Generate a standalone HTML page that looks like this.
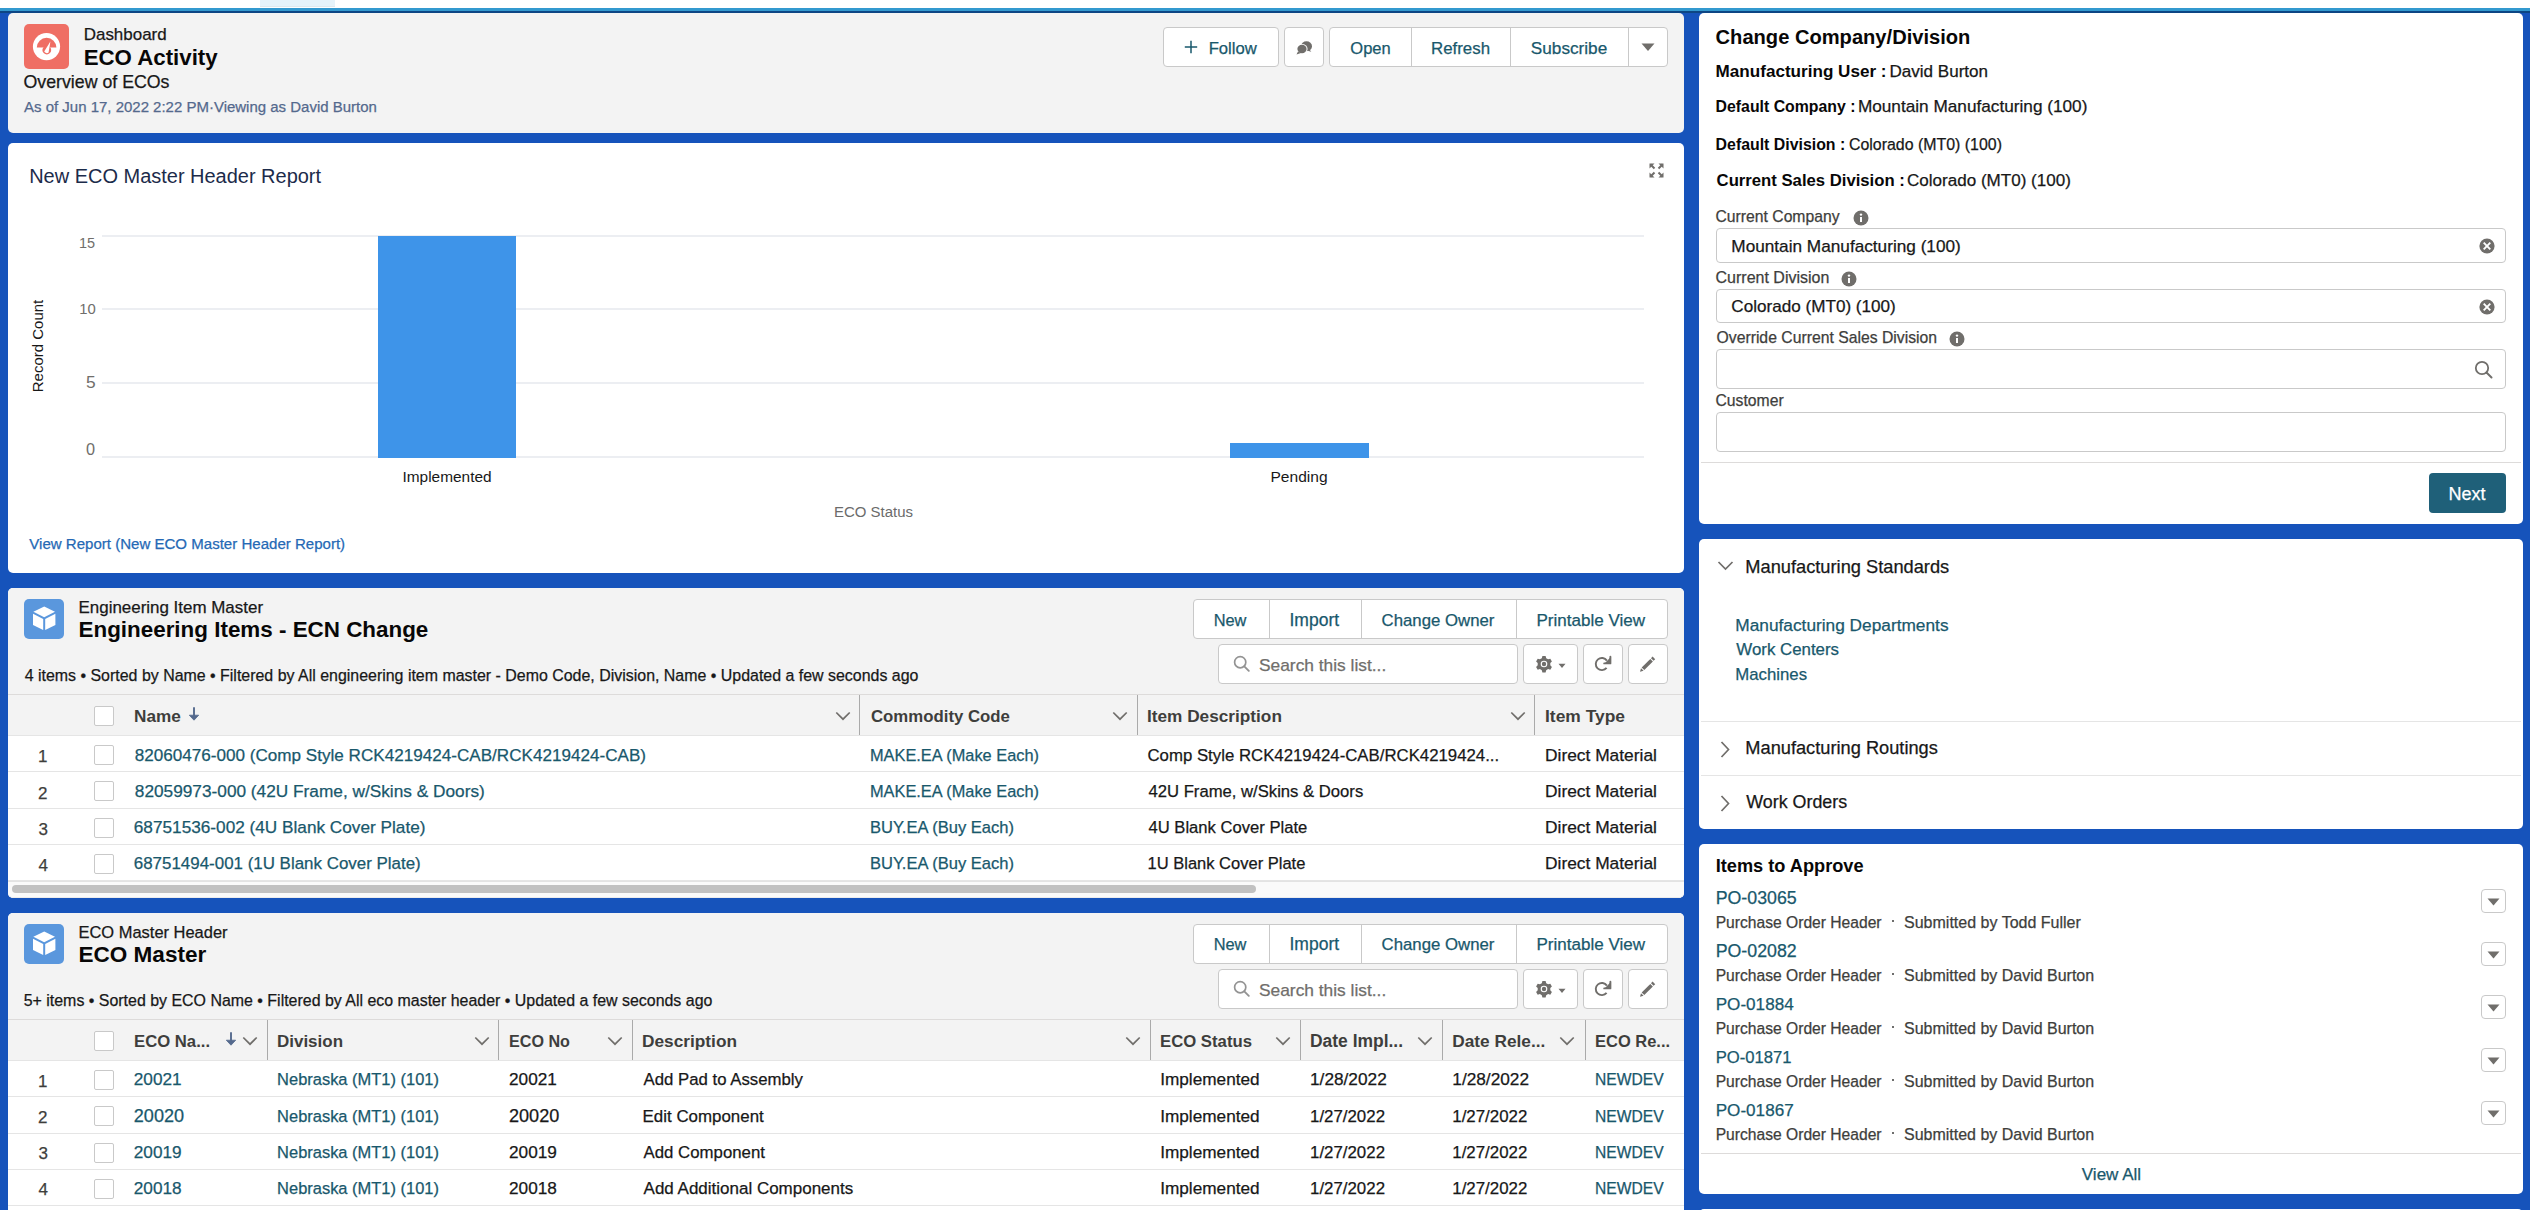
<!DOCTYPE html><html><head><meta charset="utf-8"><style>
html,body{margin:0;padding:0;width:2530px;height:1210px;overflow:hidden;background:#1653bb;font-family:"Liberation Sans",sans-serif;}
.t{position:absolute;white-space:nowrap;-webkit-text-stroke:0.25px currentColor;}
.r{position:absolute;box-sizing:border-box;}
</style></head><body>
<div class="r" style="left:0px;top:0px;width:2530px;height:8px;background:#fff"></div>
<div class="r" style="left:260px;top:0px;width:75px;height:7px;background:#e6f3fa;border-bottom:1px solid #dfe9ee"></div>
<div class="r" style="left:0px;top:8px;width:2530px;height:3px;background:#3399cf"></div>
<div class="r" style="left:0px;top:11px;width:2530px;height:2px;background:#0d4684"></div>
<div class="r" style="left:8px;top:13px;width:1676px;height:120px;background:#f3f3f3;border-radius:5px;"></div>
<div class="r" style="left:24px;top:24px;width:45px;height:45px;background:#ef6e64;border-radius:5px"></div>
<svg class="r" style="left:24px;top:24px" width="45" height="45" viewBox="0 0 45 45"><circle cx="22.5" cy="22.6" r="13.6" fill="#fff"/><path d="M12.8 23.6 A9.8 9.8 0 0 1 32.4 23.6 Z" fill="#ef6e64"/><circle cx="22.8" cy="26" r="4.4" fill="#ef6e64"/><path d="M20.2 27.6 L26.4 17.6 L24.6 28.6 Q22.5 30.5 20.2 27.6Z" fill="#fff"/></svg>
<div class="t" style="left:83.70px;top:26px;font-size:16.98px;line-height:16.98px;color:#181818;">Dashboard</div>
<div class="t" style="left:83.70px;top:47px;font-size:22.26px;line-height:22.26px;color:#080707;font-weight:700;-webkit-text-stroke:0;">ECO Activity</div>
<div class="t" style="left:23.50px;top:74px;font-size:17.75px;line-height:17.75px;color:#181818;">Overview of ECOs</div>
<div class="t" style="left:24.00px;top:99px;font-size:14.99px;line-height:14.99px;color:#54698d;">As of Jun 17, 2022 2:22 PM·Viewing as David Burton</div>
<div class="r" style="left:1163px;top:27px;width:116px;height:40px;background:#fff;border:1px solid #c9c9c9;border-radius:4px"></div>
<svg class="r" style="left:1184px;top:40px" width="14" height="14" viewBox="0 0 14 14"><path d="M7 0.8V13.2M0.8 7H13.2" stroke="#19586c" stroke-width="1.5"/></svg>
<div class="t" style="left:1208.70px;top:41px;font-size:16.65px;line-height:16.65px;color:#19586c;">Follow</div>
<div class="r" style="left:1284px;top:27px;width:40px;height:40px;background:#fff;border:1px solid #c9c9c9;border-radius:4px"></div>
<svg class="r" style="left:1294px;top:40px" width="20" height="16" viewBox="0 0 20 16"><ellipse cx="12.5" cy="6.2" rx="5.5" ry="5" fill="#706e6b"/><ellipse cx="8" cy="9" rx="5.6" ry="5" fill="#fff"/><ellipse cx="8" cy="9" rx="4.6" ry="4.2" fill="#706e6b"/><path d="M4 11.5 L2.5 14.5 L7 13Z" fill="#706e6b"/><path d="M15.5 9.5 L17.3 11.8 L13.5 10.8Z" fill="#706e6b"/></svg>
<div class="r" style="left:1329px;top:27px;width:339px;height:40px;background:#fff;border:1px solid #c9c9c9;border-radius:4px"></div>
<div class="r" style="left:1411px;top:27px;width:1px;height:40px;background:#c9c9c9"></div>
<div class="r" style="left:1510px;top:27px;width:1px;height:40px;background:#c9c9c9"></div>
<div class="r" style="left:1628px;top:27px;width:1px;height:40px;background:#c9c9c9"></div>
<div class="t" style="left:1350.30px;top:41px;font-size:16.53px;line-height:16.53px;color:#19586c;">Open</div>
<div class="t" style="left:1431.00px;top:41px;font-size:16.87px;line-height:16.87px;color:#19586c;">Refresh</div>
<div class="t" style="left:1530.80px;top:40px;font-size:17.19px;line-height:17.19px;color:#19586c;">Subscribe</div>
<svg class="r" style="left:1640px;top:42px" width="16" height="10" viewBox="0 0 16 10"><path d="M1.5 1.5H14.5L8 9Z" fill="#706e6b"/></svg>
<div class="r" style="left:8px;top:143px;width:1676px;height:430px;background:#fff;border-radius:5px;"></div>
<div class="t" style="left:29.20px;top:166px;font-size:19.98px;line-height:19.98px;color:#1c2b4a;-webkit-text-stroke:0;">New ECO Master Header Report</div>
<svg class="r" style="left:1649px;top:163px" width="15" height="15" viewBox="0 0 15 15"><g stroke="#706e6b" stroke-width="2" fill="none"><path d="M1.5 1.5L5.5 5.5M9.5 5.5L13.5 1.5M1.5 13.5L5.5 9.5M9.5 9.5L13.5 13.5"/></g><g fill="#706e6b"><path d="M0.5 0.5H5.5L0.5 5.5Z"/><path d="M14.5 0.5V5.5L9.5 0.5Z"/><path d="M0.5 14.5V9.5L5.5 14.5Z"/><path d="M14.5 14.5H9.5L14.5 9.5Z"/></g></svg>
<div class="r" style="left:102px;top:235px;width:1542px;height:2px;background:#eceef2"></div>
<div class="r" style="left:102px;top:308px;width:1542px;height:2px;background:#eceef2"></div>
<div class="r" style="left:102px;top:382px;width:1542px;height:2px;background:#eceef2"></div>
<div class="r" style="left:102px;top:456px;width:1542px;height:2px;background:#eceef2"></div>
<div class="r" style="left:378px;top:236px;width:138px;height:222px;background:#3e94e9"></div>
<div class="r" style="left:1230px;top:443px;width:139px;height:15px;background:#3e94e9"></div>
<div class="t" style="left:79.00px;top:236px;font-size:14.48px;line-height:14.48px;color:#706e6b;-webkit-text-stroke:0;">15</div>
<div class="t" style="left:79.30px;top:302px;font-size:14.87px;line-height:14.87px;color:#706e6b;-webkit-text-stroke:0;">10</div>
<div class="t" style="left:86.00px;top:374px;font-size:17.35px;line-height:17.35px;color:#706e6b;-webkit-text-stroke:0;">5</div>
<div class="t" style="left:86.00px;top:441px;font-size:16.27px;line-height:16.27px;color:#706e6b;-webkit-text-stroke:0;">0</div>
<div class="t" style="left:402.50px;top:469px;font-size:15.41px;line-height:15.41px;color:#181818;-webkit-text-stroke:0;">Implemented</div>
<div class="t" style="left:1270.50px;top:469px;font-size:15.55px;line-height:15.55px;color:#181818;-webkit-text-stroke:0;">Pending</div>
<div class="t" style="left:834.00px;top:505px;font-size:14.96px;line-height:14.96px;color:#6b6b6b;-webkit-text-stroke:0;">ECO Status</div>
<div class="t" style="left:36.9px;top:346.3px;transform:translate(-50%,-50%) rotate(-90deg);font-size:15px;line-height:15px;color:#181818;-webkit-text-stroke:0">Record Count</div>
<div class="t" style="left:29.30px;top:536px;font-size:15.05px;line-height:15.05px;color:#2569b5;">View Report (New ECO Master Header Report)</div>
<div class="r" style="left:8px;top:588px;width:1676px;height:310px;background:#fff;border-radius:5px;overflow:hidden;"></div>
<div class="r" style="left:8px;top:588px;width:1676px;height:147px;background:#f3f3f3;border-radius:5px 5px 0 0"></div>
<div class="r" style="left:24px;top:599px;width:40px;height:40px;background:#5a97dd;border-radius:5px"></div>
<svg class="r" style="left:24px;top:599px" width="40" height="40" viewBox="0 0 40 40"><path d="M20.2 7.5L31 12.8L20.2 18.2L9.4 12.8Z" fill="#fff"/><path d="M9 14.8L19.2 19.9V31L9 25.9Z" fill="#fff"/><path d="M31.4 14.8L21.2 19.9V31L31.4 25.9Z" fill="#fff"/></svg>
<div class="t" style="left:78.50px;top:600px;font-size:16.94px;line-height:16.94px;color:#181818;">Engineering Item Master</div>
<div class="t" style="left:78.50px;top:619px;font-size:22.41px;line-height:22.41px;color:#080707;font-weight:700;-webkit-text-stroke:0;">Engineering Items - ECN Change</div>
<div class="t" style="left:24.70px;top:668px;font-size:15.94px;line-height:15.94px;color:#181818;">4 items • Sorted by Name • Filtered by All engineering item master - Demo Code, Division, Name • Updated a few seconds ago</div>
<div class="r" style="left:1193px;top:599px;width:475px;height:40px;background:#fff;border:1px solid #c9c9c9;border-radius:4px"></div>
<div class="r" style="left:1269px;top:599px;width:1px;height:40px;background:#c9c9c9"></div>
<div class="r" style="left:1361px;top:599px;width:1px;height:40px;background:#c9c9c9"></div>
<div class="r" style="left:1516px;top:599px;width:1px;height:40px;background:#c9c9c9"></div>
<div class="t" style="left:1213.70px;top:612px;font-size:16.36px;line-height:16.36px;color:#19586c;">New</div>
<div class="t" style="left:1289.50px;top:612px;font-size:17.5px;line-height:17.5px;color:#19586c;">Import</div>
<div class="t" style="left:1381.60px;top:613px;font-size:16.77px;line-height:16.77px;color:#19586c;">Change Owner</div>
<div class="t" style="left:1536.50px;top:612px;font-size:17.04px;line-height:17.04px;color:#19586c;">Printable View</div>
<div class="r" style="left:1218px;top:644px;width:300px;height:40px;background:#fff;border:1px solid #c9c9c9;border-radius:4px"></div>
<svg class="r" style="left:1233px;top:655px" width="18" height="18" viewBox="0 0 18 18"><circle cx="7.2" cy="7.2" r="5.6" fill="none" stroke="#939393" stroke-width="1.7"/><path d="M11.3 11.3L15.8 15.8" stroke="#939393" stroke-width="1.9" stroke-linecap="round"/></svg>
<div class="t" style="left:1259.00px;top:657px;font-size:17.35px;line-height:17.35px;color:#706e6b;">Search this list...</div>
<div class="r" style="left:1523px;top:644px;width:55px;height:40px;background:#fff;border:1px solid #c9c9c9;border-radius:4px"></div>
<svg class="r" style="left:1534px;top:654px" width="20" height="20" viewBox="0 0 20 20"><g transform="translate(10 10)"><path fill="#706e6b" d="M-1.6 -8h3.2l0.6 2.2 1.9 1.1 2.2 -0.6 1.6 2.8 -1.6 1.6v2.2l1.6 1.6 -1.6 2.8 -2.2 -0.6 -1.9 1.1 -0.6 2.2h-3.2l-0.6 -2.2 -1.9 -1.1 -2.2 0.6 -1.6 -2.8 1.6 -1.6v-2.2l-1.6 -1.6 1.6 -2.8 2.2 0.6 1.9 -1.1z"/><circle r="3.3" fill="#fff"/><circle r="2.2" fill="#706e6b"/></g></svg>
<svg class="r" style="left:1558px;top:663px" width="8" height="6" viewBox="0 0 8 6"><path d="M0.5 0.8H7.5L4 5Z" fill="#706e6b"/></svg>
<div class="r" style="left:1583px;top:644px;width:40px;height:40px;background:#fff;border:1px solid #c9c9c9;border-radius:4px"></div>
<svg class="r" style="left:1593px;top:655px" width="20" height="20" viewBox="0 0 20 20"><path d="M13.9 5.6A6.1 6.1 0 1 0 13.6 12.9" fill="none" stroke="#706e6b" stroke-width="1.9"/><path d="M17.4 1.8V8.4H11.2" fill="none" stroke="#706e6b" stroke-width="1.9" stroke-linejoin="round" stroke-linecap="round"/><path d="M17.2 2.5V8.2H11.8Z" fill="#706e6b"/></svg>
<div class="r" style="left:1628px;top:644px;width:40px;height:40px;background:#fff;border:1px solid #c9c9c9;border-radius:4px"></div>
<svg class="r" style="left:1638px;top:654px" width="20" height="20" viewBox="0 0 20 20"><path d="M14.6 2.6l2.6 2.6 -1.6 1.6 -2.6 -2.6z" fill="#706e6b"/><path d="M12.3 4.9l2.6 2.6 -8.6 8.6 -2.6 -2.6z" fill="#706e6b"/><path d="M3 14.2l2.6 2.6 -3.6 1z" fill="#706e6b"/></svg>
<div class="r" style="left:8px;top:694px;width:1676px;height:1px;background:#dddbda"></div>
<div class="r" style="left:8px;top:735px;width:1676px;height:1px;background:#e5e5e5"></div>
<div class="r" style="left:94px;top:706px;width:20px;height:20px;background:#fff;border:1px solid #c9c9c9;border-radius:2px"></div>
<div class="t" style="left:134.00px;top:708px;font-size:17.19px;line-height:17.19px;color:#3e3e3c;font-weight:700;-webkit-text-stroke:0;">Name</div>
<svg class="r" style="left:187.7px;top:705px" width="12" height="18" viewBox="0 0 12 18"><path d="M6 3V11" stroke="#54698d" stroke-width="1.9" stroke-linecap="round"/><path d="M1.3 10.2H10.7L6 15.2Z" fill="#54698d" stroke="#54698d" stroke-width="0.8" stroke-linejoin="round"/></svg>
<svg class="r" style="left:835px;top:708px" width="16" height="16" viewBox="0 0 16 16"><path d="M1.3 4.5L8 11.2L14.7 4.5" fill="none" stroke="#706e6b" stroke-width="1.7"/></svg>
<div class="r" style="left:859px;top:695px;width:1px;height:40px;background:#aaaaaa"></div>
<div class="t" style="left:871.00px;top:709px;font-size:16.79px;line-height:16.79px;color:#3e3e3c;font-weight:700;-webkit-text-stroke:0;">Commodity Code</div>
<svg class="r" style="left:1112px;top:708px" width="16" height="16" viewBox="0 0 16 16"><path d="M1.3 4.5L8 11.2L14.7 4.5" fill="none" stroke="#706e6b" stroke-width="1.7"/></svg>
<div class="r" style="left:1137px;top:695px;width:1px;height:40px;background:#aaaaaa"></div>
<div class="t" style="left:1147.00px;top:708px;font-size:17.23px;line-height:17.23px;color:#3e3e3c;font-weight:700;-webkit-text-stroke:0;">Item Description</div>
<svg class="r" style="left:1510px;top:708px" width="16" height="16" viewBox="0 0 16 16"><path d="M1.3 4.5L8 11.2L14.7 4.5" fill="none" stroke="#706e6b" stroke-width="1.7"/></svg>
<div class="r" style="left:1534px;top:695px;width:1px;height:40px;background:#aaaaaa"></div>
<div class="t" style="left:1545.00px;top:708px;font-size:17.41px;line-height:17.41px;color:#3e3e3c;font-weight:700;-webkit-text-stroke:0;">Item Type</div>
<div class="r" style="left:8px;top:771px;width:1676px;height:1px;background:#e5e5e5"></div>
<div class="t" style="left:38.00px;top:748px;font-size:17px;line-height:17px;color:#3e3e3c;">1</div>
<div class="r" style="left:94px;top:745px;width:20px;height:20px;background:#fff;border:1px solid #c9c9c9;border-radius:2px"></div>
<div class="t" style="left:134.80px;top:747px;font-size:17.1px;line-height:17.1px;color:#19586c;">82060476-000 (Comp Style RCK4219424-CAB/RCK4219424-CAB)</div>
<div class="t" style="left:870.00px;top:747px;font-size:16.35px;line-height:16.35px;color:#19586c;">MAKE.EA (Make Each)</div>
<div class="t" style="left:1147.50px;top:748px;font-size:16.8px;line-height:16.8px;color:#181818;">Comp Style RCK4219424-CAB/RCK4219424...</div>
<div class="t" style="left:1545.00px;top:747px;font-size:17.38px;line-height:17.38px;color:#181818;">Direct Material</div>
<div class="r" style="left:8px;top:808px;width:1676px;height:1px;background:#e5e5e5"></div>
<div class="t" style="left:38.00px;top:785px;font-size:17px;line-height:17px;color:#3e3e3c;">2</div>
<div class="r" style="left:94px;top:781px;width:20px;height:20px;background:#fff;border:1px solid #c9c9c9;border-radius:2px"></div>
<div class="t" style="left:134.80px;top:783px;font-size:17.25px;line-height:17.25px;color:#19586c;">82059973-000 (42U Frame, w/Skins &amp; Doors)</div>
<div class="t" style="left:870.00px;top:783px;font-size:16.35px;line-height:16.35px;color:#19586c;">MAKE.EA (Make Each)</div>
<div class="t" style="left:1148.50px;top:784px;font-size:16.67px;line-height:16.67px;color:#181818;">42U Frame, w/Skins &amp; Doors</div>
<div class="t" style="left:1545.00px;top:783px;font-size:17.38px;line-height:17.38px;color:#181818;">Direct Material</div>
<div class="r" style="left:8px;top:844px;width:1676px;height:1px;background:#e5e5e5"></div>
<div class="t" style="left:38.50px;top:821px;font-size:17px;line-height:17px;color:#3e3e3c;">3</div>
<div class="r" style="left:94px;top:818px;width:20px;height:20px;background:#fff;border:1px solid #c9c9c9;border-radius:2px"></div>
<div class="t" style="left:133.80px;top:819px;font-size:17.22px;line-height:17.22px;color:#19586c;">68751536-002 (4U Blank Cover Plate)</div>
<div class="t" style="left:870.00px;top:820px;font-size:16.54px;line-height:16.54px;color:#19586c;">BUY.EA (Buy Each)</div>
<div class="t" style="left:1148.50px;top:820px;font-size:16.63px;line-height:16.63px;color:#181818;">4U Blank Cover Plate</div>
<div class="t" style="left:1545.00px;top:819px;font-size:17.38px;line-height:17.38px;color:#181818;">Direct Material</div>
<div class="r" style="left:8px;top:880px;width:1676px;height:1px;background:#e5e5e5"></div>
<div class="t" style="left:38.50px;top:857px;font-size:17px;line-height:17px;color:#3e3e3c;">4</div>
<div class="r" style="left:94px;top:854px;width:20px;height:20px;background:#fff;border:1px solid #c9c9c9;border-radius:2px"></div>
<div class="t" style="left:133.80px;top:856px;font-size:16.93px;line-height:16.93px;color:#19586c;">68751494-001 (1U Blank Cover Plate)</div>
<div class="t" style="left:870.00px;top:856px;font-size:16.54px;line-height:16.54px;color:#19586c;">BUY.EA (Buy Each)</div>
<div class="t" style="left:1147.50px;top:856px;font-size:16.53px;line-height:16.53px;color:#181818;">1U Blank Cover Plate</div>
<div class="t" style="left:1545.00px;top:855px;font-size:17.38px;line-height:17.38px;color:#181818;">Direct Material</div>
<div class="r" style="left:8px;top:881px;width:1676px;height:17px;background:#fafafa;border-top:1px solid #e3e3e3;border-bottom:1px solid #ececec;border-radius:0 0 5px 5px"></div>
<div class="r" style="left:12px;top:885px;width:1244px;height:8px;background:#c1c1c1;border-radius:4px"></div>
<div class="r" style="left:8px;top:913px;width:1676px;height:347px;background:#fff;border-radius:5px;overflow:hidden;"></div>
<div class="r" style="left:8px;top:913px;width:1676px;height:147px;background:#f3f3f3;border-radius:5px 5px 0 0"></div>
<div class="r" style="left:24px;top:924px;width:40px;height:40px;background:#5a97dd;border-radius:5px"></div>
<svg class="r" style="left:24px;top:924px" width="40" height="40" viewBox="0 0 40 40"><path d="M20.2 7.5L31 12.8L20.2 18.2L9.4 12.8Z" fill="#fff"/><path d="M9 14.8L19.2 19.9V31L9 25.9Z" fill="#fff"/><path d="M31.4 14.8L21.2 19.9V31L31.4 25.9Z" fill="#fff"/></svg>
<div class="t" style="left:78.50px;top:924px;font-size:16.47px;line-height:16.47px;color:#181818;">ECO Master Header</div>
<div class="t" style="left:78.50px;top:944px;font-size:22.54px;line-height:22.54px;color:#080707;font-weight:700;-webkit-text-stroke:0;">ECO Master</div>
<div class="t" style="left:23.70px;top:993px;font-size:15.95px;line-height:15.95px;color:#181818;">5+ items • Sorted by ECO Name • Filtered by All eco master header • Updated a few seconds ago</div>
<div class="r" style="left:1193px;top:924px;width:475px;height:40px;background:#fff;border:1px solid #c9c9c9;border-radius:4px"></div>
<div class="r" style="left:1269px;top:924px;width:1px;height:40px;background:#c9c9c9"></div>
<div class="r" style="left:1361px;top:924px;width:1px;height:40px;background:#c9c9c9"></div>
<div class="r" style="left:1516px;top:924px;width:1px;height:40px;background:#c9c9c9"></div>
<div class="t" style="left:1213.70px;top:936px;font-size:16.36px;line-height:16.36px;color:#19586c;">New</div>
<div class="t" style="left:1289.50px;top:936px;font-size:17.5px;line-height:17.5px;color:#19586c;">Import</div>
<div class="t" style="left:1381.60px;top:937px;font-size:16.77px;line-height:16.77px;color:#19586c;">Change Owner</div>
<div class="t" style="left:1536.50px;top:936px;font-size:17.04px;line-height:17.04px;color:#19586c;">Printable View</div>
<div class="r" style="left:1218px;top:969px;width:300px;height:40px;background:#fff;border:1px solid #c9c9c9;border-radius:4px"></div>
<svg class="r" style="left:1233px;top:980px" width="18" height="18" viewBox="0 0 18 18"><circle cx="7.2" cy="7.2" r="5.6" fill="none" stroke="#939393" stroke-width="1.7"/><path d="M11.3 11.3L15.8 15.8" stroke="#939393" stroke-width="1.9" stroke-linecap="round"/></svg>
<div class="t" style="left:1259.00px;top:982px;font-size:17.35px;line-height:17.35px;color:#706e6b;">Search this list...</div>
<div class="r" style="left:1523px;top:969px;width:55px;height:40px;background:#fff;border:1px solid #c9c9c9;border-radius:4px"></div>
<svg class="r" style="left:1534px;top:979px" width="20" height="20" viewBox="0 0 20 20"><g transform="translate(10 10)"><path fill="#706e6b" d="M-1.6 -8h3.2l0.6 2.2 1.9 1.1 2.2 -0.6 1.6 2.8 -1.6 1.6v2.2l1.6 1.6 -1.6 2.8 -2.2 -0.6 -1.9 1.1 -0.6 2.2h-3.2l-0.6 -2.2 -1.9 -1.1 -2.2 0.6 -1.6 -2.8 1.6 -1.6v-2.2l-1.6 -1.6 1.6 -2.8 2.2 0.6 1.9 -1.1z"/><circle r="3.3" fill="#fff"/><circle r="2.2" fill="#706e6b"/></g></svg>
<svg class="r" style="left:1558px;top:988px" width="8" height="6" viewBox="0 0 8 6"><path d="M0.5 0.8H7.5L4 5Z" fill="#706e6b"/></svg>
<div class="r" style="left:1583px;top:969px;width:40px;height:40px;background:#fff;border:1px solid #c9c9c9;border-radius:4px"></div>
<svg class="r" style="left:1593px;top:980px" width="20" height="20" viewBox="0 0 20 20"><path d="M13.9 5.6A6.1 6.1 0 1 0 13.6 12.9" fill="none" stroke="#706e6b" stroke-width="1.9"/><path d="M17.4 1.8V8.4H11.2" fill="none" stroke="#706e6b" stroke-width="1.9" stroke-linejoin="round" stroke-linecap="round"/><path d="M17.2 2.5V8.2H11.8Z" fill="#706e6b"/></svg>
<div class="r" style="left:1628px;top:969px;width:40px;height:40px;background:#fff;border:1px solid #c9c9c9;border-radius:4px"></div>
<svg class="r" style="left:1638px;top:979px" width="20" height="20" viewBox="0 0 20 20"><path d="M14.6 2.6l2.6 2.6 -1.6 1.6 -2.6 -2.6z" fill="#706e6b"/><path d="M12.3 4.9l2.6 2.6 -8.6 8.6 -2.6 -2.6z" fill="#706e6b"/><path d="M3 14.2l2.6 2.6 -3.6 1z" fill="#706e6b"/></svg>
<div class="r" style="left:8px;top:1019px;width:1676px;height:1px;background:#dddbda"></div>
<div class="r" style="left:8px;top:1060px;width:1676px;height:1px;background:#e5e5e5"></div>
<div class="r" style="left:94px;top:1031px;width:20px;height:20px;background:#fff;border:1px solid #c9c9c9;border-radius:2px"></div>
<div class="t" style="left:134.00px;top:1034px;font-size:16.7px;line-height:16.7px;color:#3e3e3c;font-weight:700;-webkit-text-stroke:0;">ECO Na...</div>
<svg class="r" style="left:225px;top:1030px" width="12" height="18" viewBox="0 0 12 18"><path d="M6 3V11" stroke="#54698d" stroke-width="1.9" stroke-linecap="round"/><path d="M1.3 10.2H10.7L6 15.2Z" fill="#54698d" stroke="#54698d" stroke-width="0.8" stroke-linejoin="round"/></svg>
<svg class="r" style="left:242px;top:1033px" width="16" height="16" viewBox="0 0 16 16"><path d="M1.3 4.5L8 11.2L14.7 4.5" fill="none" stroke="#706e6b" stroke-width="1.7"/></svg>
<div class="r" style="left:267px;top:1020px;width:1px;height:40px;background:#aaaaaa"></div>
<div class="t" style="left:277.00px;top:1033px;font-size:16.98px;line-height:16.98px;color:#3e3e3c;font-weight:700;-webkit-text-stroke:0;">Division</div>
<svg class="r" style="left:473.5px;top:1033px" width="16" height="16" viewBox="0 0 16 16"><path d="M1.3 4.5L8 11.2L14.7 4.5" fill="none" stroke="#706e6b" stroke-width="1.7"/></svg>
<div class="r" style="left:498px;top:1020px;width:1px;height:40px;background:#aaaaaa"></div>
<div class="t" style="left:509.00px;top:1033px;font-size:16.14px;line-height:16.14px;color:#3e3e3c;font-weight:700;-webkit-text-stroke:0;">ECO No</div>
<svg class="r" style="left:607px;top:1033px" width="16" height="16" viewBox="0 0 16 16"><path d="M1.3 4.5L8 11.2L14.7 4.5" fill="none" stroke="#706e6b" stroke-width="1.7"/></svg>
<div class="r" style="left:632px;top:1020px;width:1px;height:40px;background:#aaaaaa"></div>
<div class="t" style="left:642.00px;top:1033px;font-size:17.28px;line-height:17.28px;color:#3e3e3c;font-weight:700;-webkit-text-stroke:0;">Description</div>
<svg class="r" style="left:1124.5px;top:1033px" width="16" height="16" viewBox="0 0 16 16"><path d="M1.3 4.5L8 11.2L14.7 4.5" fill="none" stroke="#706e6b" stroke-width="1.7"/></svg>
<div class="r" style="left:1150px;top:1020px;width:1px;height:40px;background:#aaaaaa"></div>
<div class="t" style="left:1160.00px;top:1034px;font-size:16.73px;line-height:16.73px;color:#3e3e3c;font-weight:700;-webkit-text-stroke:0;">ECO Status</div>
<svg class="r" style="left:1274.6px;top:1033px" width="16" height="16" viewBox="0 0 16 16"><path d="M1.3 4.5L8 11.2L14.7 4.5" fill="none" stroke="#706e6b" stroke-width="1.7"/></svg>
<div class="r" style="left:1300px;top:1020px;width:1px;height:40px;background:#aaaaaa"></div>
<div class="t" style="left:1310.00px;top:1033px;font-size:17.44px;line-height:17.44px;color:#3e3e3c;font-weight:700;-webkit-text-stroke:0;">Date Impl...</div>
<svg class="r" style="left:1417px;top:1033px" width="16" height="16" viewBox="0 0 16 16"><path d="M1.3 4.5L8 11.2L14.7 4.5" fill="none" stroke="#706e6b" stroke-width="1.7"/></svg>
<div class="r" style="left:1442px;top:1020px;width:1px;height:40px;background:#aaaaaa"></div>
<div class="t" style="left:1452.30px;top:1033px;font-size:17.26px;line-height:17.26px;color:#3e3e3c;font-weight:700;-webkit-text-stroke:0;">Date Rele...</div>
<svg class="r" style="left:1559px;top:1033px" width="16" height="16" viewBox="0 0 16 16"><path d="M1.3 4.5L8 11.2L14.7 4.5" fill="none" stroke="#706e6b" stroke-width="1.7"/></svg>
<div class="r" style="left:1585px;top:1020px;width:1px;height:40px;background:#aaaaaa"></div>
<div class="t" style="left:1595.00px;top:1033px;font-size:16.48px;line-height:16.48px;color:#3e3e3c;font-weight:700;-webkit-text-stroke:0;">ECO Re...</div>
<div class="r" style="left:8px;top:1096px;width:1676px;height:1px;background:#e5e5e5"></div>
<div class="t" style="left:38.00px;top:1073px;font-size:17px;line-height:17px;color:#3e3e3c;">1</div>
<div class="r" style="left:94px;top:1070px;width:20px;height:20px;background:#fff;border:1px solid #c9c9c9;border-radius:2px"></div>
<div class="t" style="left:133.80px;top:1071px;font-size:17.21px;line-height:17.21px;color:#19586c;">20021</div>
<div class="t" style="left:277.10px;top:1071px;font-size:16.47px;line-height:16.47px;color:#19586c;">Nebraska (MT1) (101)</div>
<div class="t" style="left:509.00px;top:1071px;font-size:17.21px;line-height:17.21px;color:#181818;">20021</div>
<div class="t" style="left:643.60px;top:1072px;font-size:16.75px;line-height:16.75px;color:#181818;">Add Pad to Assembly</div>
<div class="t" style="left:1160.20px;top:1071px;font-size:17.21px;line-height:17.21px;color:#181818;">Implemented</div>
<div class="t" style="left:1310.00px;top:1071px;font-size:17.26px;line-height:17.26px;color:#181818;">1/28/2022</div>
<div class="t" style="left:1452.30px;top:1071px;font-size:17.26px;line-height:17.26px;color:#181818;">1/28/2022</div>
<div class="t" style="left:1595.00px;top:1072px;font-size:15.63px;line-height:15.63px;color:#19586c;">NEWDEV</div>
<div class="r" style="left:8px;top:1133px;width:1676px;height:1px;background:#e5e5e5"></div>
<div class="t" style="left:38.00px;top:1109px;font-size:17px;line-height:17px;color:#3e3e3c;">2</div>
<div class="r" style="left:94px;top:1106px;width:20px;height:20px;background:#fff;border:1px solid #c9c9c9;border-radius:2px"></div>
<div class="t" style="left:133.80px;top:1107px;font-size:18.08px;line-height:18.08px;color:#19586c;">20020</div>
<div class="t" style="left:277.10px;top:1108px;font-size:16.47px;line-height:16.47px;color:#19586c;">Nebraska (MT1) (101)</div>
<div class="t" style="left:509.00px;top:1107px;font-size:18.08px;line-height:18.08px;color:#181818;">20020</div>
<div class="t" style="left:642.60px;top:1109px;font-size:16.9px;line-height:16.9px;color:#181818;">Edit Component</div>
<div class="t" style="left:1160.20px;top:1108px;font-size:17.21px;line-height:17.21px;color:#181818;">Implemented</div>
<div class="t" style="left:1310.00px;top:1109px;font-size:16.86px;line-height:16.86px;color:#181818;">1/27/2022</div>
<div class="t" style="left:1452.30px;top:1109px;font-size:16.86px;line-height:16.86px;color:#181818;">1/27/2022</div>
<div class="t" style="left:1595.00px;top:1109px;font-size:15.63px;line-height:15.63px;color:#19586c;">NEWDEV</div>
<div class="r" style="left:8px;top:1169px;width:1676px;height:1px;background:#e5e5e5"></div>
<div class="t" style="left:38.50px;top:1145px;font-size:17px;line-height:17px;color:#3e3e3c;">3</div>
<div class="r" style="left:94px;top:1143px;width:20px;height:20px;background:#fff;border:1px solid #c9c9c9;border-radius:2px"></div>
<div class="t" style="left:133.80px;top:1144px;font-size:17.21px;line-height:17.21px;color:#19586c;">20019</div>
<div class="t" style="left:277.10px;top:1144px;font-size:16.47px;line-height:16.47px;color:#19586c;">Nebraska (MT1) (101)</div>
<div class="t" style="left:509.00px;top:1144px;font-size:17.21px;line-height:17.21px;color:#181818;">20019</div>
<div class="t" style="left:643.60px;top:1145px;font-size:16.8px;line-height:16.8px;color:#181818;">Add Component</div>
<div class="t" style="left:1160.20px;top:1144px;font-size:17.21px;line-height:17.21px;color:#181818;">Implemented</div>
<div class="t" style="left:1310.00px;top:1145px;font-size:16.86px;line-height:16.86px;color:#181818;">1/27/2022</div>
<div class="t" style="left:1452.30px;top:1145px;font-size:16.86px;line-height:16.86px;color:#181818;">1/27/2022</div>
<div class="t" style="left:1595.00px;top:1145px;font-size:15.63px;line-height:15.63px;color:#19586c;">NEWDEV</div>
<div class="r" style="left:8px;top:1205px;width:1676px;height:1px;background:#e5e5e5"></div>
<div class="t" style="left:38.50px;top:1181px;font-size:17px;line-height:17px;color:#3e3e3c;">4</div>
<div class="r" style="left:94px;top:1179px;width:20px;height:20px;background:#fff;border:1px solid #c9c9c9;border-radius:2px"></div>
<div class="t" style="left:133.80px;top:1180px;font-size:17.21px;line-height:17.21px;color:#19586c;">20018</div>
<div class="t" style="left:277.10px;top:1180px;font-size:16.47px;line-height:16.47px;color:#19586c;">Nebraska (MT1) (101)</div>
<div class="t" style="left:509.00px;top:1180px;font-size:17.21px;line-height:17.21px;color:#181818;">20018</div>
<div class="t" style="left:643.60px;top:1180px;font-size:16.99px;line-height:16.99px;color:#181818;">Add Additional Components</div>
<div class="t" style="left:1160.20px;top:1180px;font-size:17.21px;line-height:17.21px;color:#181818;">Implemented</div>
<div class="t" style="left:1310.00px;top:1181px;font-size:16.86px;line-height:16.86px;color:#181818;">1/27/2022</div>
<div class="t" style="left:1452.30px;top:1181px;font-size:16.86px;line-height:16.86px;color:#181818;">1/27/2022</div>
<div class="t" style="left:1595.00px;top:1181px;font-size:15.63px;line-height:15.63px;color:#19586c;">NEWDEV</div>
<div class="r" style="left:1699px;top:13px;width:824px;height:511px;background:#fff;border-radius:5px;"></div>
<div class="t" style="left:1715.60px;top:27px;font-size:20.13px;line-height:20.13px;color:#080707;font-weight:700;-webkit-text-stroke:0;">Change Company/Division</div>
<div class="t" style="left:1715.60px;top:63px;font-size:17.1px;line-height:17.1px;color:#080707;font-weight:700;-webkit-text-stroke:0;">Manufacturing User :</div>
<div class="t" style="left:1889.50px;top:63px;font-size:17.06px;line-height:17.06px;color:#181818;">David Burton</div>
<div class="t" style="left:1715.60px;top:99px;font-size:15.83px;line-height:15.83px;color:#080707;font-weight:700;-webkit-text-stroke:0;">Default Company :</div>
<div class="t" style="left:1857.90px;top:98px;font-size:17.2px;line-height:17.2px;color:#181818;">Mountain Manufacturing (100)</div>
<div class="t" style="left:1715.60px;top:137px;font-size:15.89px;line-height:15.89px;color:#080707;font-weight:700;-webkit-text-stroke:0;">Default Division :</div>
<div class="t" style="left:1849.00px;top:137px;font-size:15.92px;line-height:15.92px;color:#181818;">Colorado (MT0) (100)</div>
<div class="t" style="left:1716.60px;top:173px;font-size:16.7px;line-height:16.7px;color:#080707;font-weight:700;-webkit-text-stroke:0;">Current Sales Division :</div>
<div class="t" style="left:1907.00px;top:172px;font-size:17.06px;line-height:17.06px;color:#181818;">Colorado (MT0) (100)</div>
<div class="t" style="left:1715.50px;top:209px;font-size:15.72px;line-height:15.72px;color:#3e3e3c;">Current Company</div>
<svg class="r" style="left:1852.5px;top:209.7px" width="16" height="16" viewBox="0 0 16 16"><circle cx="8" cy="8" r="7.5" fill="#706e6b"/><rect x="7" y="7" width="2" height="5" fill="#fff"/><circle cx="8" cy="4.6" r="1.2" fill="#fff"/></svg>
<div class="r" style="left:1716px;top:228px;width:790px;height:35px;background:#fff;border:1px solid #c9c9c9;border-radius:4px"></div>
<div class="t" style="left:1731.30px;top:238px;font-size:17.21px;line-height:17.21px;color:#181818;">Mountain Manufacturing (100)</div>
<svg class="r" style="left:2479.3px;top:238.3px" width="16" height="16" viewBox="0 0 16 16"><circle cx="8" cy="8" r="7.6" fill="#706e6b"/><path d="M4.7 4.7L11.3 11.3M11.3 4.7L4.7 11.3" stroke="#fff" stroke-width="1.9"/></svg>
<div class="t" style="left:1715.50px;top:269px;font-size:16.03px;line-height:16.03px;color:#3e3e3c;">Current Division</div>
<svg class="r" style="left:1840.8px;top:270.5px" width="16" height="16" viewBox="0 0 16 16"><circle cx="8" cy="8" r="7.5" fill="#706e6b"/><rect x="7" y="7" width="2" height="5" fill="#fff"/><circle cx="8" cy="4.6" r="1.2" fill="#fff"/></svg>
<div class="r" style="left:1716px;top:289px;width:790px;height:34px;background:#fff;border:1px solid #c9c9c9;border-radius:4px"></div>
<div class="t" style="left:1731.30px;top:298px;font-size:17.12px;line-height:17.12px;color:#181818;">Colorado (MT0) (100)</div>
<svg class="r" style="left:2479.3px;top:298.5px" width="16" height="16" viewBox="0 0 16 16"><circle cx="8" cy="8" r="7.6" fill="#706e6b"/><path d="M4.7 4.7L11.3 11.3M11.3 4.7L4.7 11.3" stroke="#fff" stroke-width="1.9"/></svg>
<div class="t" style="left:1716.50px;top:330px;font-size:15.75px;line-height:15.75px;color:#3e3e3c;">Override Current Sales Division</div>
<svg class="r" style="left:1948.5px;top:331px" width="16" height="16" viewBox="0 0 16 16"><circle cx="8" cy="8" r="7.5" fill="#706e6b"/><rect x="7" y="7" width="2" height="5" fill="#fff"/><circle cx="8" cy="4.6" r="1.2" fill="#fff"/></svg>
<div class="r" style="left:1716px;top:349px;width:790px;height:40px;background:#fff;border:1px solid #c9c9c9;border-radius:4px"></div>
<svg class="r" style="left:2474px;top:360px" width="20" height="20" viewBox="0 0 20 20"><circle cx="8" cy="8" r="6.2" fill="none" stroke="#706e6b" stroke-width="1.8"/><path d="M12.5 12.5L17.5 17.5" stroke="#706e6b" stroke-width="2" stroke-linecap="round"/></svg>
<div class="t" style="left:1715.50px;top:393px;font-size:15.74px;line-height:15.74px;color:#3e3e3c;">Customer</div>
<div class="r" style="left:1716px;top:412px;width:790px;height:40px;background:#fff;border:1px solid #c9c9c9;border-radius:4px"></div>
<div class="r" style="left:1701px;top:462px;width:820px;height:1px;background:#dddbda"></div>
<div class="r" style="left:2429px;top:473px;width:77px;height:40px;background:#1f6079;border-radius:4px"></div>
<div class="t" style="left:2448.50px;top:485px;font-size:18.02px;line-height:18.02px;color:#fff;">Next</div>
<div class="r" style="left:1699px;top:539px;width:824px;height:290px;background:#fff;border-radius:5px;"></div>
<svg class="r" style="left:1717px;top:560px" width="17" height="12" viewBox="0 0 17 12"><path d="M1.5 2L8.5 9L15.5 2" fill="none" stroke="#706e6b" stroke-width="1.7"/></svg>
<div class="t" style="left:1745.30px;top:558px;font-size:18.26px;line-height:18.26px;color:#181818;">Manufacturing Standards</div>
<div class="t" style="left:1735.30px;top:617px;font-size:17.29px;line-height:17.29px;color:#19586c;">Manufacturing Departments</div>
<div class="t" style="left:1736.30px;top:642px;font-size:16.87px;line-height:16.87px;color:#19586c;">Work Centers</div>
<div class="t" style="left:1735.30px;top:667px;font-size:16.78px;line-height:16.78px;color:#19586c;">Machines</div>
<div class="r" style="left:1701px;top:721px;width:820px;height:1px;background:#e5e5e5"></div>
<svg class="r" style="left:1719px;top:740px" width="12" height="19" viewBox="0 0 12 19"><path d="M2.5 2L9.5 9.5L2.5 17" fill="none" stroke="#706e6b" stroke-width="1.7"/></svg>
<div class="t" style="left:1745.30px;top:739px;font-size:18.24px;line-height:18.24px;color:#181818;">Manufacturing Routings</div>
<div class="r" style="left:1701px;top:775px;width:820px;height:1px;background:#e5e5e5"></div>
<svg class="r" style="left:1719px;top:794px" width="12" height="19" viewBox="0 0 12 19"><path d="M2.5 2L9.5 9.5L2.5 17" fill="none" stroke="#706e6b" stroke-width="1.7"/></svg>
<div class="t" style="left:1746.30px;top:794px;font-size:17.88px;line-height:17.88px;color:#181818;">Work Orders</div>
<div class="r" style="left:1699px;top:844px;width:824px;height:350px;background:#fff;border-radius:5px;"></div>
<div class="t" style="left:1715.70px;top:857px;font-size:18.21px;line-height:18.21px;color:#080707;font-weight:700;-webkit-text-stroke:0;">Items to Approve</div>
<div class="t" style="left:1715.70px;top:890px;font-size:17.77px;line-height:17.77px;color:#19586c;">PO-03065</div>
<div class="t" style="left:1715.70px;top:915px;font-size:15.64px;line-height:15.64px;color:#3e3e3c;">Purchase Order Header</div>
<div class="r" style="left:1892px;top:920px;width:2px;height:2px;background:#3e3e3c;border-radius:1px"></div>
<div class="t" style="left:1904.00px;top:914px;font-size:16.03px;line-height:16.03px;color:#3e3e3c;">Submitted by Todd Fuller</div>
<div class="r" style="left:2481px;top:889px;width:25px;height:24px;background:#fff;border:1px solid #c9c9c9;border-radius:4px"></div>
<svg class="r" style="left:2487px;top:898px" width="13" height="9" viewBox="0 0 13 9"><path d="M0.5 0.5H12.5L6.5 7.5Z" fill="#706e6b"/></svg>
<div class="t" style="left:1715.70px;top:943px;font-size:17.77px;line-height:17.77px;color:#19586c;">PO-02082</div>
<div class="t" style="left:1715.70px;top:968px;font-size:15.64px;line-height:15.64px;color:#3e3e3c;">Purchase Order Header</div>
<div class="r" style="left:1892px;top:973px;width:2px;height:2px;background:#3e3e3c;border-radius:1px"></div>
<div class="t" style="left:1904.00px;top:968px;font-size:15.99px;line-height:15.99px;color:#3e3e3c;">Submitted by David Burton</div>
<div class="r" style="left:2481px;top:942px;width:25px;height:24px;background:#fff;border:1px solid #c9c9c9;border-radius:4px"></div>
<svg class="r" style="left:2487px;top:951px" width="13" height="9" viewBox="0 0 13 9"><path d="M0.5 0.5H12.5L6.5 7.5Z" fill="#706e6b"/></svg>
<div class="t" style="left:1715.70px;top:996px;font-size:17.11px;line-height:17.11px;color:#19586c;">PO-01884</div>
<div class="t" style="left:1715.70px;top:1021px;font-size:15.64px;line-height:15.64px;color:#3e3e3c;">Purchase Order Header</div>
<div class="r" style="left:1892px;top:1026px;width:2px;height:2px;background:#3e3e3c;border-radius:1px"></div>
<div class="t" style="left:1904.00px;top:1021px;font-size:15.99px;line-height:15.99px;color:#3e3e3c;">Submitted by David Burton</div>
<div class="r" style="left:2481px;top:995px;width:25px;height:24px;background:#fff;border:1px solid #c9c9c9;border-radius:4px"></div>
<svg class="r" style="left:2487px;top:1004px" width="13" height="9" viewBox="0 0 13 9"><path d="M0.5 0.5H12.5L6.5 7.5Z" fill="#706e6b"/></svg>
<div class="t" style="left:1715.70px;top:1050px;font-size:16.67px;line-height:16.67px;color:#19586c;">PO-01871</div>
<div class="t" style="left:1715.70px;top:1074px;font-size:15.64px;line-height:15.64px;color:#3e3e3c;">Purchase Order Header</div>
<div class="r" style="left:1892px;top:1079px;width:2px;height:2px;background:#3e3e3c;border-radius:1px"></div>
<div class="t" style="left:1904.00px;top:1074px;font-size:15.99px;line-height:15.99px;color:#3e3e3c;">Submitted by David Burton</div>
<div class="r" style="left:2481px;top:1048px;width:25px;height:24px;background:#fff;border:1px solid #c9c9c9;border-radius:4px"></div>
<svg class="r" style="left:2487px;top:1057px" width="13" height="9" viewBox="0 0 13 9"><path d="M0.5 0.5H12.5L6.5 7.5Z" fill="#706e6b"/></svg>
<div class="t" style="left:1715.70px;top:1102px;font-size:17.11px;line-height:17.11px;color:#19586c;">PO-01867</div>
<div class="t" style="left:1715.70px;top:1127px;font-size:15.64px;line-height:15.64px;color:#3e3e3c;">Purchase Order Header</div>
<div class="r" style="left:1892px;top:1132px;width:2px;height:2px;background:#3e3e3c;border-radius:1px"></div>
<div class="t" style="left:1904.00px;top:1127px;font-size:15.99px;line-height:15.99px;color:#3e3e3c;">Submitted by David Burton</div>
<div class="r" style="left:2481px;top:1101px;width:25px;height:24px;background:#fff;border:1px solid #c9c9c9;border-radius:4px"></div>
<svg class="r" style="left:2487px;top:1110px" width="13" height="9" viewBox="0 0 13 9"><path d="M0.5 0.5H12.5L6.5 7.5Z" fill="#706e6b"/></svg>
<div class="r" style="left:1701px;top:1153px;width:820px;height:1px;background:#dddbda"></div>
<div class="t" style="left:2081.80px;top:1166px;font-size:17.05px;line-height:17.05px;color:#19586c;">View All</div>
<div class="r" style="left:1699px;top:1209px;width:824px;height:21px;background:#fff;border-radius:5px;"></div>
</body></html>
